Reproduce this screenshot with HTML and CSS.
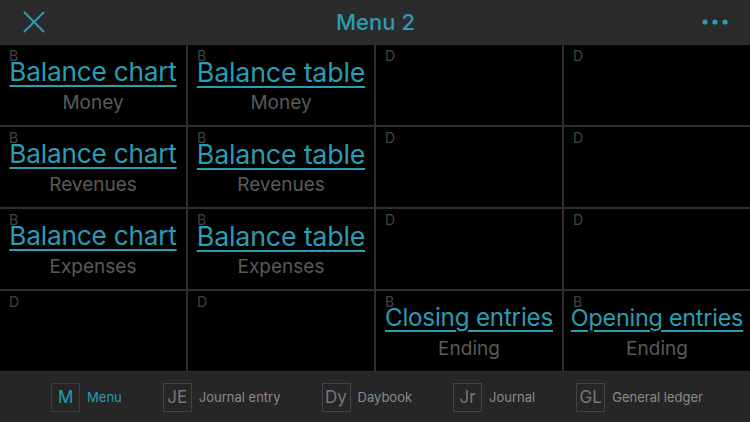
FILE: index.html
```html
<!DOCTYPE html>
<html lang="en">
<head>
    <meta charset="UTF-8">
    <meta name="viewport" content="width=device-width, initial-scale=1.0">
    <title>Menu 2</title>
    <link rel="stylesheet" href="styles.css">
</head>
<body>
    <div class="app">
        <div class="top-bar">
            <button class="icon-btn close-btn" aria-label="Close">
                <svg width="22" height="22" viewBox="0 0 22 22">
                    <path d="M1 1 L21 21 M21 1 L1 21" stroke="#2a9db4" stroke-width="2" fill="none"/>
                </svg>
            </button>
            <div class="title">Menu 2</div>
            <button class="icon-btn more-btn" aria-label="More">
                <svg width="26" height="8" viewBox="0 0 26 8">
                    <circle cx="3" cy="4" r="2.6" fill="#2a9db4"/>
                    <circle cx="13" cy="4" r="2.6" fill="#2a9db4"/>
                    <circle cx="23" cy="4" r="2.6" fill="#2a9db4"/>
                </svg>
            </button>
        </div>

        <div class="grid">
            <div class="cell"><span class="tag">B</span><a class="link fit-chart" href="#">Balance chart</a><div class="sub">Money</div></div>
            <div class="cell"><span class="tag">B</span><a class="link fit-table" href="#">Balance table</a><div class="sub">Money</div></div>
            <div class="cell"><span class="tag">D</span></div>
            <div class="cell"><span class="tag">D</span></div>

            <div class="cell"><span class="tag">B</span><a class="link fit-chart" href="#">Balance chart</a><div class="sub">Revenues</div></div>
            <div class="cell"><span class="tag">B</span><a class="link fit-table" href="#">Balance table</a><div class="sub">Revenues</div></div>
            <div class="cell"><span class="tag">D</span></div>
            <div class="cell"><span class="tag">D</span></div>

            <div class="cell"><span class="tag">B</span><a class="link fit-chart" href="#">Balance chart</a><div class="sub">Expenses</div></div>
            <div class="cell"><span class="tag">B</span><a class="link fit-table" href="#">Balance table</a><div class="sub">Expenses</div></div>
            <div class="cell"><span class="tag">D</span></div>
            <div class="cell"><span class="tag">D</span></div>

            <div class="cell"><span class="tag">D</span></div>
            <div class="cell"><span class="tag">D</span></div>
            <div class="cell"><span class="tag">B</span><a class="link fit-closing" href="#">Closing entries</a><div class="sub">Ending</div></div>
            <div class="cell"><span class="tag">B</span><a class="link fit-opening" href="#">Opening entries</a><div class="sub">Ending</div></div>
        </div>

        <div class="tab-bar">
            <div class="tab active"><span class="tab-box">M</span><span class="tab-label">Menu</span></div>
            <div class="tab"><span class="tab-box">JE</span><span class="tab-label">Journal entry</span></div>
            <div class="tab"><span class="tab-box">Dy</span><span class="tab-label">Daybook</span></div>
            <div class="tab"><span class="tab-box">Jr</span><span class="tab-label">Journal</span></div>
            <div class="tab"><span class="tab-box">GL</span><span class="tab-label">General ledger</span></div>
        </div>
    </div>
</body>
</html>
```

FILE: styles.css
```css
body {
    margin: 0;
    background-color: #000;
    font-family: Inter, Roboto, "Liberation Sans", sans-serif;
}
.app {
    display: flex;
    flex-direction: column;
    width: 750px;
    height: 422px;
    overflow: hidden;
}
.top-bar {
    height: 45px;
    flex: none;
    background-color: #2b2b2b;
    display: flex;
    align-items: center;
    justify-content: space-between;
    padding: 0 22px 0 23px;
}
.icon-btn {
    background: none;
    border: none;
    padding: 0;
    cursor: pointer;
    display: flex;
    align-items: center;
}
.close-btn {
    width: 60px;
    margin-top: -2px;
}
.more-btn {
    width: 60px;
    justify-content: flex-end;
    margin-top: -2px;
}
.title {
    color: #2a9db4;
    font-size: 22px;
    font-weight: 500;
    margin-top: -1px;
}
.grid {
    height: 327px;
    flex: none;
    display: grid;
    grid-template-columns: repeat(4, 1fr);
    grid-template-rows: repeat(4, 1fr);
    gap: 2px;
    padding-bottom: 1px;
    box-sizing: border-box;
    background-color: #2e2e2e;
}
.cell {
    position: relative;
    background-color: #000;
    display: flex;
    flex-direction: column;
    align-items: center;
    justify-content: center;
}
.tag {
    position: absolute;
    top: 2px;
    left: 9px;
    font-size: 14px;
    color: #444;
}
.link {
    color: #2a9db4;
    font-size: 25px;
    line-height: 30px;
    height: 30px;
    letter-spacing: -0.2px;
    text-decoration: underline;
    text-decoration-thickness: 2px;
    text-underline-offset: 4px;
    white-space: nowrap;
}
.link.fit-chart {
    font-size: 26.2px;
}
.link.fit-table {
    font-size: 26.8px;
}
.link.fit-closing {
    font-size: 24.2px;
}
.link.fit-opening {
    font-size: 23.3px;
}
.sub {
    color: #5a5a5a;
    font-size: 19px;
    line-height: 22px;
    margin-top: 5px;
}
.tab-bar {
    flex: 1;
    background-color: #262626;
    display: flex;
    align-items: center;
    justify-content: center;
    gap: 41px;
    padding-left: 4px;
}
.tab {
    display: flex;
    align-items: center;
    gap: 7px;
    color: #8a8a8a;
}
.tab-box {
    width: 27px;
    height: 27px;
    border: 1px solid #444;
    display: flex;
    align-items: center;
    justify-content: center;
    font-size: 17px;
    color: #777;
}
.tab-label {
    font-size: 13px;
}
.tab.active .tab-box {
    border-color: #1f4a55;
    color: #2a9db4;
}
.tab.active .tab-label {
    color: #2a9db4;
}
```
